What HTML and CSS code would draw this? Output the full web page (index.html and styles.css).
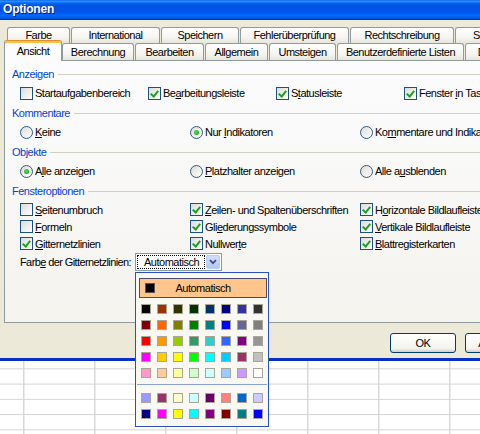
FILE: index.html
```html
<!DOCTYPE html>
<html lang="de">
<head>
<meta charset="utf-8">
<title>Optionen</title>
<link rel="stylesheet" href="styles.css">
</head>
<body>
<div class="window">
  <div class="titlebar">Optionen</div>
  <div class="dlg">
    <div class="tabrow r1">
      <div class="tab w-farbe">Farbe</div>
      <div class="tab w-intl">International</div>
      <div class="tab w-speich">Speichern</div>
      <div class="tab w-fehler">Fehlerüberprüfung</div>
      <div class="tab w-recht">Rechtschreibung</div>
      <div class="tab w-sich">Sicherheit</div>
    </div>
    <div class="tabrow r2">
      <div class="tab active w-ansicht">Ansicht</div>
      <div class="tab w-berech">Berechnung</div>
      <div class="tab w-bearb">Bearbeiten</div>
      <div class="tab w-allg">Allgemein</div>
      <div class="tab w-umst">Umsteigen</div>
      <div class="tab w-listen">Benutzerdefinierte Listen</div>
      <div class="tab w-diag">Diagramm</div>
    </div>
    <div class="panel">
      <div class="group-head">Anzeigen</div>
      <div class="opts cols4 first">
        <label class="opt"><span class="box"></span><span class="lbl">Startaufgabenbereich</span></label>
        <label class="opt"><span class="box on"></span><span class="lbl">Be<u>a</u>rbeitungsleiste</span></label>
        <label class="opt"><span class="box on"></span><span class="lbl">S<u>t</u>atusleiste</span></label>
        <label class="opt"><span class="box on"></span><span class="lbl">Fenster <u>i</u>n Taskleiste</span></label>
      </div>

      <div class="group-head">Kommentare</div>
      <div class="opts cols3 first">
        <label class="opt"><span class="radio"></span><span class="lbl"><u>K</u>eine</span></label>
        <label class="opt"><span class="radio on"></span><span class="lbl">Nur <u>I</u>ndikatoren</span></label>
        <label class="opt"><span class="radio"></span><span class="lbl">Ko<u>m</u>mentare und Indikatoren</span></label>
      </div>

      <div class="group-head">Objekte</div>
      <div class="opts cols3 first">
        <label class="opt"><span class="radio on"></span><span class="lbl">A<u>l</u>le anzeigen</span></label>
        <label class="opt"><span class="radio"></span><span class="lbl"><u>P</u>latzhalter anzeigen</span></label>
        <label class="opt"><span class="radio"></span><span class="lbl">Alle a<u>u</u>sblenden</span></label>
      </div>

      <div class="group-head">Fensteroptionen</div>
      <div class="opts cols3 win first-win">
        <label class="opt"><span class="box"></span><span class="lbl"><u>S</u>eitenumbruch</span></label>
        <label class="opt"><span class="box on"></span><span class="lbl"><u>Z</u>eilen- und Spaltenüberschriften</span></label>
        <label class="opt"><span class="box on"></span><span class="lbl">H<u>o</u>rizontale Bildlaufleiste</span></label>
      </div>
      <div class="opts cols3 win">
        <label class="opt"><span class="box"></span><span class="lbl"><u>F</u>ormeln</span></label>
        <label class="opt"><span class="box on"></span><span class="lbl">Gli<u>e</u>derungssymbole</span></label>
        <label class="opt"><span class="box on"></span><span class="lbl"><u>V</u>ertikale Bildlaufleiste</span></label>
      </div>
      <div class="opts cols3 win">
        <label class="opt"><span class="box on"></span><span class="lbl"><u>G</u>itternetzlinien</span></label>
        <label class="opt"><span class="box on"></span><span class="lbl">Nullwer<u>t</u>e</span></label>
        <label class="opt"><span class="box on"></span><span class="lbl"><u>B</u>lattregisterkarten</span></label>
      </div>

      <div class="combo-row">
        <span class="combo-label">Farb<u>e</u> der Gitternetzlinien:</span>
        <div class="combo">
          <span class="combo-val">Automatisch</span>
          <span class="combo-btn"><svg width="8" height="6" viewBox="0 0 8 6"><path d="M1 1.2 L4 4.2 L7 1.2" fill="none" stroke="#3F4F8B" stroke-width="1.8"/></svg></span>
        </div>
      </div>
    </div>
    <div class="btnrow">
      <div class="btn ok">OK</div>
      <div class="btn cancel">Abbrechen</div>
    </div>
  </div>
  <div class="sheet"></div>
</div>

<div class="popup">
  <div class="auto"><span class="auto-sw"></span><span class="auto-txt">Automatisch</span></div>
  <div class="swatches">
    <span class="sw" style="background:#000000"></span>
    <span class="sw" style="background:#993300"></span>
    <span class="sw" style="background:#333300"></span>
    <span class="sw" style="background:#003300"></span>
    <span class="sw" style="background:#003366"></span>
    <span class="sw" style="background:#000080"></span>
    <span class="sw" style="background:#333399"></span>
    <span class="sw" style="background:#333333"></span>

    <span class="sw" style="background:#800000"></span>
    <span class="sw" style="background:#FF6600"></span>
    <span class="sw" style="background:#808000"></span>
    <span class="sw" style="background:#008000"></span>
    <span class="sw" style="background:#008080"></span>
    <span class="sw" style="background:#0000FF"></span>
    <span class="sw" style="background:#666699"></span>
    <span class="sw" style="background:#808080"></span>

    <span class="sw" style="background:#FF0000"></span>
    <span class="sw" style="background:#FF9900"></span>
    <span class="sw" style="background:#99CC00"></span>
    <span class="sw" style="background:#339966"></span>
    <span class="sw" style="background:#33CCCC"></span>
    <span class="sw" style="background:#3366FF"></span>
    <span class="sw" style="background:#800080"></span>
    <span class="sw" style="background:#969696"></span>

    <span class="sw" style="background:#FF00FF"></span>
    <span class="sw" style="background:#FFCC00"></span>
    <span class="sw" style="background:#FFFF00"></span>
    <span class="sw" style="background:#00FF00"></span>
    <span class="sw" style="background:#00FFFF"></span>
    <span class="sw" style="background:#00CCFF"></span>
    <span class="sw" style="background:#993366"></span>
    <span class="sw" style="background:#C0C0C0"></span>

    <span class="sw" style="background:#FF99CC"></span>
    <span class="sw" style="background:#FFCC99"></span>
    <span class="sw" style="background:#FFFF99"></span>
    <span class="sw" style="background:#CCFFCC"></span>
    <span class="sw" style="background:#CCFFFF"></span>
    <span class="sw" style="background:#99CCFF"></span>
    <span class="sw" style="background:#CC99FF"></span>
    <span class="sw" style="background:#FFFFFF"></span>
  </div>
  <div class="sep"></div>
  <div class="swatches second">
    <span class="sw" style="background:#9999FF"></span>
    <span class="sw" style="background:#993366"></span>
    <span class="sw" style="background:#FFFFCC"></span>
    <span class="sw" style="background:#CCFFFF"></span>
    <span class="sw" style="background:#660066"></span>
    <span class="sw" style="background:#FF8080"></span>
    <span class="sw" style="background:#0066CC"></span>
    <span class="sw" style="background:#CCCCFF"></span>

    <span class="sw" style="background:#000080"></span>
    <span class="sw" style="background:#FF00FF"></span>
    <span class="sw" style="background:#FFFF00"></span>
    <span class="sw" style="background:#00FFFF"></span>
    <span class="sw" style="background:#800080"></span>
    <span class="sw" style="background:#800000"></span>
    <span class="sw" style="background:#008080"></span>
    <span class="sw" style="background:#0000FF"></span>
  </div>
</div>
</body>
</html>
```
FILE: styles.css
```css
* { box-sizing: border-box; }

html, body {
  margin: 0;
  padding: 0;
  width: 480px;
  height: 434px;
  overflow: hidden;
}

body {
  position: relative;
  font-family: "Liberation Sans", Arial, sans-serif;
  font-size: 11px;
  letter-spacing: -0.5px;
  color: #000;
  background: #fff;
}

.window { width: 560px; }

/* ---------- title bar ---------- */
.titlebar {
  height: 20px;
  padding-left: 3px;
  line-height: 19px;
  color: #fff;
  font-size: 12px;
  font-weight: bold;
  letter-spacing: -0.2px;
  text-shadow: 1px 1px 0 #0A1883;
  background: linear-gradient(to bottom,
    #0058ee 0%, #3593ff 5%, #288eff 8%, #127dff 11%, #036ffc 14%,
    #0262ee 18%, #0057e5 24%, #0054e3 30%, #0055eb 56%, #005bf5 66%,
    #026afe 76%, #0062ef 86%, #0052d6 92%, #0040ab 96%, #003092 100%);
}

/* ---------- dialog body ---------- */
.dlg {
  height: 341px;
  padding: 7px 0 0 4px;
  background: #ECE9D8;
  border-bottom: 3px solid #0A2FC9;
}

.tabrow { display: flex; }
.tabrow.r1 { height: 16px; margin-left: 3px; }
.tabrow.r2 { height: 17px; align-items: flex-end; }

.tab {
  flex: none;
  height: 100%;
  margin-right: 1px;
  border: 1px solid #919B9C;
  border-bottom: none;
  border-radius: 3px 3px 0 0;
  background: linear-gradient(#FFFFFF, #F5F4EF 65%, #E7E5DC);
  text-align: center;
  line-height: 15px;
  white-space: nowrap;
  overflow: hidden;
}
.r2 .tab { line-height: 16px; }

.tab.active {
  position: relative;
  z-index: 2;
  height: 21px;
  margin-bottom: -1px;
  margin-right: 0;
  border-top: 1px solid #E68B2C;
  background: #FCFCFE;
  box-shadow: inset 0 2px 0 #FFC73C;
  line-height: 20px;
}

.w-farbe { width: 63px; }
.w-intl { width: 89px; }
.w-speich { width: 78px; }
.w-fehler { width: 109px; }
.w-recht { width: 104px; }
.w-sich { width: 80px; }
.w-ansicht { width: 58px; }
.w-berech { width: 72px; }
.w-bearb { width: 69px; }
.w-allg { width: 63px; }
.w-umst { width: 67px; }
.w-listen { width: 127px; }
.w-diag { width: 72px; }

/* ---------- panel ---------- */
.panel {
  position: relative;
  z-index: 1;
  width: 540px;
  height: 263px;
  padding-top: 6px;
  border: 1px solid #919B9C;
  background: linear-gradient(#FCFCFE, #F4F3EE);
}

.group-head {
  display: flex;
  align-items: center;
  height: 14px;
  padding-left: 7px;
  color: #0046D5;
  margin-top: 5px;
}
.group-head:first-child { margin-top: 0; }
.group-head::after {
  content: "";
  flex: 1;
  height: 1px;
  margin-left: 4px;
  background: #D0D0BF;
}

.opts {
  display: grid;
  padding-left: 15px;
  height: 16px;
}
.opts.first { margin-top: 4px; }
.cols4 { grid-template-columns: repeat(4, 128px); }
.cols3 { grid-template-columns: repeat(3, 170px); }
.opts.win { height: 17px; }
.opts.first-win { margin-top: 3px; }

.opt {
  display: flex;
  align-items: center;
  white-space: nowrap;
}
.lbl { white-space: pre; }

.box, .radio {
  position: relative;
  flex: none;
  width: 13px;
  height: 13px;
  margin-right: 2px;
  border: 1px solid #1C5180;
  background: linear-gradient(135deg, #DCDCD7, #FFFFFF);
}
.radio {
  border-radius: 50%;
  border-color: #2F5B8A;
}
.box.on::after {
  content: "";
  position: absolute;
  left: 3px;
  top: 1px;
  width: 3px;
  height: 6px;
  border: solid #21A121;
  border-width: 0 2px 2px 0;
  transform: rotate(40deg);
}
.radio.on::after {
  content: "";
  position: absolute;
  left: 3px;
  top: 3px;
  width: 5px;
  height: 5px;
  border-radius: 50%;
  background: radial-gradient(circle at 40% 40%, #62DC5E, #21A121 75%);
}

/* ---------- combo ---------- */
.combo-row {
  display: flex;
  align-items: center;
  height: 18px;
  margin-top: 1px;
  padding-left: 15px;
}
.combo-label { width: 115px; white-space: nowrap; letter-spacing: -0.6px; }
.combo {
  display: flex;
  width: 87px;
  height: 18px;
  padding: 1px;
  border: 1px solid #7F9DB9;
  background: #fff;
}
.combo-val {
  flex: 1;
  margin-right: 1px;
  padding-left: 6px;
  border: 1px dotted #000;
  line-height: 12px;
}
.combo-btn {
  display: flex;
  align-items: center;
  justify-content: center;
  width: 14px;
  border: 1px solid #B9CDF6;
  border-radius: 2px;
  background: linear-gradient(#D2DEFB, #B4C8F6);
}

/* ---------- buttons ---------- */
.btnrow {
  display: flex;
  gap: 9px;
  margin-top: 10px;
  padding-left: 386px;
}
.btn {
  height: 20px;
  border: 1px solid #003C74;
  border-radius: 3px;
  background: linear-gradient(#FFFFFF, #F3F3EF 80%, #D6D0C5);
  text-align: center;
  line-height: 18px;
}
.btn.ok { width: 66px; }
.btn.cancel { width: 75px; }

/* ---------- spreadsheet ---------- */
.sheet {
  height: 73px;
  background-color: #fff;
  background-image:
    linear-gradient(to bottom, transparent 14.25px, #D3D3D3 14.25px),
    linear-gradient(to right, transparent 70px, #C6C6C6 70px);
  background-size: 100% 15.25px, 71px 100%;
  background-position: 0 -6.95px, -46.7px 0;
}

/* ---------- colour popup ---------- */
.popup {
  position: absolute;
  left: 135px;
  top: 272px;
  z-index: 5;
  width: 134px;
  height: 155px;
  padding-top: 5px;
  border: 1px solid #2E4FC4;
  background: #F9F8F3;
}
.auto {
  display: flex;
  align-items: center;
  width: 128px;
  height: 20px;
  margin-left: 3px;
  border: 1px solid #4B4B6F;
  background: #FFC58A;
}
.auto-sw {
  flex: none;
  width: 10px;
  height: 10px;
  margin-left: 5px;
  border: 1px solid #555;
  background: #000;
}
.auto-txt {
  flex: 1;
  margin-right: 15px;
  text-align: center;
}
.swatches {
  display: grid;
  grid-template-columns: repeat(8, 10px);
  grid-auto-rows: 10px;
  gap: 6px;
  margin: 6px 0 0 5px;
}
.swatches.second { margin-top: 8px; }
.sw {
  display: block;
  border: 1px solid #A9A597;
}
.sep {
  height: 1px;
  margin: 6px 1px 0 1px;
  background: #8DA1D9;
}
```
